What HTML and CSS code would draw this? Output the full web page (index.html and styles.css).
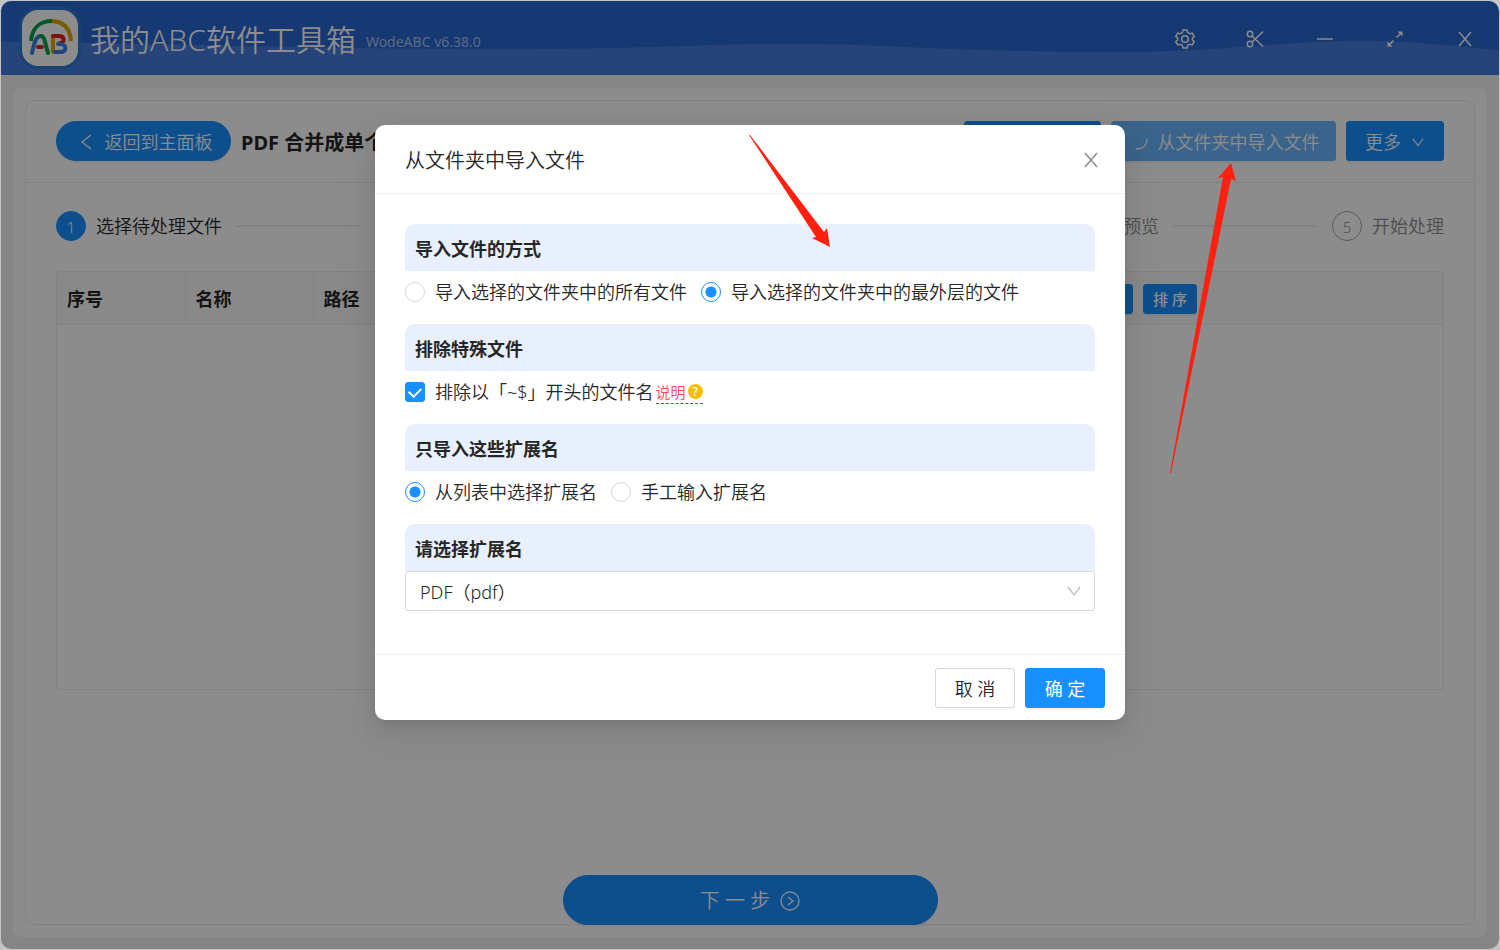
FILE: index.html
```html
<!DOCTYPE html>
<html lang="zh-CN">
<head>
  <meta charset="UTF-8">
  <meta name="viewport" content="width=device-width, initial-scale=1.0">
  <title>我的ABC软件工具箱</title>
  <link rel="stylesheet" href="styles.css">
</head>
<body>
  <div class="window">
    <!-- Title bar -->
    <header class="titlebar">
      <svg class="wave" viewBox="0 0 1500 74" preserveAspectRatio="none" aria-hidden="true">
        <path d="M0 41 C120 41 300 48 500 48 C700 48 720 40 860 44 C960 49 1040 51 1120 51 C1220 51 1280 40 1365 40 C1420 40 1460 46 1500 49 V74 H0 Z" fill="#457ddc"/>
      </svg>
      <div class="brand">
        <svg class="logo" viewBox="0 0 56 56" aria-hidden="true" fill="none" stroke-linecap="round" stroke-linejoin="round">
          <path d="M49 31 C48 17 40 11 28 11" stroke="#e0a400" stroke-width="4" stroke-linecap="butt"/>
          <path d="M9 31 C10 18 18 11 30 11" stroke="#00a046" stroke-width="4" stroke-linecap="butt"/>
          <path d="M10 43 C13 29 15 26 19 26" stroke="#3f7fe8" stroke-width="4"/>
          <path d="M19 26 C23 26 23 34 26 43" stroke="#00a046" stroke-width="4"/>
          <path d="M16 37 H20" stroke="#e02222" stroke-width="4"/>
          <path d="M31 27 V42" stroke="#e0a400" stroke-width="4"/>
          <path d="M31 26 H37 C43 26 43 33 38 33" stroke="#e02222" stroke-width="4"/>
          <path d="M36 34 H38 C45 34 45 42 39 42 H33" stroke="#3f7fe8" stroke-width="4"/>
        </svg>
        <h1>我的ABC软件工具箱</h1>
        <span class="version">WodeABC v6.38.0</span>
      </div>
      <div class="controls">
        <button type="button" aria-label="设置">
          <svg viewBox="0 0 20 20"><path d="M8 1 H12 L12.600 3.600 L14.600 4.700 L17.200 4 L19.200 7.400 L17.300 9.200 V10.800 L19.200 12.600 L17.200 16 L14.600 15.300 L12.600 16.400 L12 19 H8 L7.400 16.400 L5.400 15.300 L2.800 16 L0.800 12.600 L2.700 10.800 V9.200 L0.800 7.400 L2.800 4 L5.400 4.700 L7.400 3.600 Z"/><circle cx="10" cy="10" r="3.300"/></svg>
        </button>
        <button type="button" aria-label="截图">
          <svg viewBox="0 0 20 20"><circle cx="5" cy="5" r="2.700"/><circle cx="5" cy="15" r="2.700"/><path d="M7 7 L18 17.500 M7 13 L18 2.500"/></svg>
        </button>
        <button type="button" aria-label="最小化">
          <svg viewBox="0 0 20 20"><path d="M2 10 H18"/></svg>
        </button>
        <button type="button" aria-label="最大化">
          <svg viewBox="0 0 20 20"><path d="M11.500 8.500 L16 4 M8.500 11.500 L4 16"/><path class="solid" d="M12.500 2.500 H17.500 V7.500 Z M2.500 12.500 V17.500 H7.500 Z"/></svg>
        </button>
        <button type="button" aria-label="关闭">
          <svg viewBox="0 0 20 20"><path d="M4 3 L16 17 M16 3 L4 17"/></svg>
        </button>
      </div>
    </header>

    <!-- Page -->
    <main class="page">
      <div class="card">
        <div class="panel">
          <div class="toolbar">
            <button type="button" class="btn primary back">
              <svg class="icon" viewBox="0 0 16 16"><path d="M12 1 L3 8 L12 15"/></svg>
              返回到主面板
            </button>
            <h2>PDF 合并成单个</h2>
            <div class="actions">
              <button type="button" class="btn primary add" aria-label="添加文件"></button>
              <button type="button" class="btn primary loading">
                <svg class="icon" viewBox="0 0 16 16"><path d="M15 5 C15 11 11 15 4 15"/></svg>
                从文件夹中导入文件
              </button>
              <button type="button" class="btn primary more">
                更多
                <svg class="icon small" viewBox="0 0 16 16"><path d="M2 4 L8 12 L14 4"/></svg>
              </button>
            </div>
          </div>

          <ol class="steps">
            <li class="active"><span class="num">1</span>选择待处理文件</li>
            <li></li>
            <li></li>
            <li class="preview">预览</li>
            <li><span class="num">5</span>开始处理</li>
          </ol>

          <div class="table-wrap">
            <table>
              <thead>
                <tr>
                  <th>序号</th>
                  <th>名称</th>
                  <th>路径</th>
                  <th class="ops">
                    <div class="ops-row">
                      <button type="button" class="btn primary mini" aria-label="筛选"></button>
                      <button type="button" class="btn primary mini">排 序</button>
                    </div>
                  </th>
                </tr>
              </thead>
            </table>
          </div>

          <button type="button" class="btn primary next">
            下 一 步
            <svg class="icon" viewBox="0 0 20 20"><circle cx="10" cy="10" r="9"/><path d="M8 6 L13 10 L8 14"/></svg>
          </button>
        </div>
      </div>
    </main>

    <div class="mask"></div>
  </div>

  <!-- Import dialog -->
  <div class="modal" role="dialog" aria-labelledby="modalTitle">
    <div class="modal-header">
      <h2 id="modalTitle">从文件夹中导入文件</h2>
      <button type="button" class="close" aria-label="关闭">
        <svg viewBox="0 0 20 20"><path d="M4 3 L16 17 M16 3 L4 17"/></svg>
      </button>
    </div>
    <div class="modal-body">
      <h3>导入文件的方式</h3>
      <div class="row">
        <label><input type="radio" name="mode">导入选择的文件夹中的所有文件</label>
        <label><input type="radio" name="mode" checked>导入选择的文件夹中的最外层的文件</label>
      </div>

      <h3>排除特殊文件</h3>
      <div class="row exclude">
        <label><input type="checkbox" checked>排除以「~$」开头的文件名</label>
        <a href="#" class="help">说明<span class="mark">?</span></a>
      </div>

      <h3>只导入这些扩展名</h3>
      <div class="row">
        <label><input type="radio" name="ext" checked>从列表中选择扩展名</label>
        <label><input type="radio" name="ext">手工输入扩展名</label>
      </div>

      <h3><label for="extSelect">请选择扩展名</label></h3>
      <div class="select">
        <select id="extSelect">
          <option>PDF（pdf）</option>
        </select>
        <svg viewBox="0 0 16 16"><path d="M2 4 L8 12 L14 4"/></svg>
      </div>
    </div>
    <div class="modal-footer">
      <button type="button" class="btn">取 消</button>
      <button type="button" class="btn primary">确 定</button>
    </div>
  </div>

  <!-- Arrows over the dialog and the page -->
  <svg class="arrows" width="500" height="350" viewBox="745 130 500 350" aria-hidden="true">
    <path d="M749 135 L750 135 L824 232 L827 228 L830 247 L812 238 L816 237 Z"/>
    <path d="M1170 473 L1171 473 L1231 179 L1236 181 L1231 163 L1218 178 L1223 177 Z"/>
  </svg>
</body>
</html>
```
FILE: styles.css
```css
* {
  box-sizing: border-box;
}

body {
  margin: 0;
  padding: 1px;
  min-height: 100vh;
  display: flex;
  background: #c4c4c4;
  color: #262626;
  font-family: "Noto Sans", "Noto Sans CJK SC", sans-serif;
  font-size: 18px;
  font-weight: 350;
  line-height: 28px;
}

h1, h2, h3 {
  margin: 0;
}

button, input, select {
  font: inherit;
  color: inherit;
  margin: 0;
}

svg {
  fill: none;
  stroke: currentColor;
}

.window {
  position: relative;
  flex: 1;
  display: flex;
  flex-direction: column;
  background: #f2f2f2;
  border-radius: 10px;
  overflow: hidden;
}

/* Title bar */
.titlebar {
  position: relative;
  height: 74px;
  display: flex;
  align-items: center;
  justify-content: space-between;
  padding-left: 21px;
  background: #2866d1;
  color: #fff;
}

.wave {
  position: absolute;
  inset: 0;
  width: 100%;
  height: 100%;
  stroke: none;
}

.brand {
  position: relative;
  display: flex;
  align-items: center;
}

.logo {
  width: 56px;
  height: 56px;
  margin-right: 12px;
  background: #fff;
  border-radius: 16px;
  box-shadow: 0 0 0 3px #2a7ad0;
}

.brand h1 {
  padding-top: 3px;
  font-size: 30px;
  font-weight: 350;
  line-height: 40px;
}

.version {
  margin-left: 10px;
  padding-top: 8px;
  font-size: 14px;
  font-weight: 400;
  color: rgba(255, 255, 255, 0.6);
}

.controls {
  position: relative;
  display: flex;
  padding-top: 2px;
  margin-right: -1px;
}

.controls button {
  width: 70px;
  height: 40px;
  padding: 0;
  border: 0;
  background: none;
}

.controls svg {
  display: block;
  width: 20px;
  height: 20px;
  margin: 0 auto;
  stroke-width: 1.5;
}

.solid {
  fill: currentColor;
  stroke: none;
}

/* Page */
.page {
  flex: 1;
  display: flex;
  padding: 13px 12px 12px;
}

.card {
  flex: 1;
  display: flex;
  padding: 12px;
  background: #fff;
  border-radius: 8px;
}

.panel {
  flex: 1;
  display: flex;
  flex-direction: column;
  border: 1px solid #ebebeb;
  border-radius: 10px;
}

.toolbar {
  display: flex;
  align-items: center;
  gap: 10px;
  padding: 20px 30px 21px;
  border-bottom: 1px solid #ebebeb;
}

.toolbar h2 {
  padding-top: 3px;
  font-size: 20px;
  font-weight: 700;
}

.actions {
  display: flex;
  gap: 10px;
  margin-left: auto;
}

.btn {
  display: inline-flex;
  align-items: center;
  justify-content: center;
  gap: 10px;
  height: 40px;
  padding: 2px 18px 0;
  border: 1px solid #d9d9d9;
  border-radius: 3px;
  background: #fff;
  box-shadow: 0 2px 0 rgba(0, 0, 0, 0.02);
  white-space: nowrap;
}

.primary {
  background: #1890ff;
  border-color: #1890ff;
  color: #fff;
  box-shadow: 0 2px 0 rgba(0, 0, 0, 0.04);
}

.icon {
  width: 16px;
  height: 16px;
  stroke-width: 1.3;
}

.small {
  width: 14px;
  height: 14px;
}

.back {
  width: 175px;
  padding-right: 14px;
  border-radius: 20px;
}

.add {
  width: 137px;
}

.loading {
  width: 225px;
  padding-right: 14px;
  background: #6cb7ff;
  border-color: #6cb7ff;
}

.more {
  width: 98px;
}

/* Steps */
.steps {
  display: grid;
  grid-template-columns: repeat(4, 1fr) auto;
  margin: 0;
  padding: 28px 30px;
  list-style: none;
  color: #8c8c8c;
}

.steps li {
  display: flex;
  align-items: center;
  gap: 10px;
  white-space: nowrap;
}

.steps li:not(:last-child)::after {
  content: "";
  flex: 1;
  height: 2px;
  margin: 0 15px 0 4px;
  background: #ebebeb;
}

.steps .preview {
  padding-left: 110px;
}

.num {
  width: 30px;
  height: 30px;
  border: 1px solid #a6a6a6;
  border-radius: 50%;
  font-size: 15px;
  line-height: 30px;
  text-align: center;
}

.steps .active {
  color: #262626;
}

.active .num {
  background: #1890ff;
  border-color: #1890ff;
  color: #fff;
}

/* File table */
.table-wrap {
  height: 419px;
  margin: 2px 30px 0;
  border: 1px solid #ebebeb;
  border-radius: 4px;
}

table {
  width: 100%;
  table-layout: fixed;
  border-collapse: collapse;
}

th {
  width: 128px;
  height: 52px;
  padding: 2px 10px 0;
  background: #fafafa;
  border-right: 1px solid #ebebeb;
  border-bottom: 1px solid #ebebeb;
  font-weight: 700;
  text-align: left;
}

.ops {
  width: auto;
  border-right: 0;
}

.ops-row {
  display: flex;
  justify-content: flex-end;
  gap: 10px;
  padding-right: 236px;
}

.mini {
  width: 54px;
  height: 30px;
  padding: 0;
  font-size: 15px;
  font-weight: 500;
}

.next {
  width: 375px;
  height: 50px;
  margin: auto auto -1px;
  border-radius: 25px;
  font-size: 20px;
}

.next .icon {
  width: 20px;
  height: 20px;
}

.mask {
  position: absolute;
  inset: 0;
  background: rgba(0, 0, 0, 0.45);
}

/* Import dialog */
.modal {
  position: absolute;
  top: 125px;
  left: 50%;
  width: 750px;
  margin-left: -375px;
  background: #fff;
  border-radius: 10px;
  box-shadow: 0 4px 8px -5px rgba(0, 0, 0, 0.12), 0 8px 20px rgba(0, 0, 0, 0.08), 0 12px 36px 10px rgba(0, 0, 0, 0.05);
}

.modal-header {
  display: flex;
  align-items: center;
  justify-content: space-between;
  height: 69px;
  padding: 2px 24px 0 30px;
  border-bottom: 1px solid #f0f0f0;
}

.modal-header h2 {
  padding-top: 2px;
  font-size: 20px;
  font-weight: 350;
}

.close {
  padding: 0;
  border: 0;
  background: none;
  color: #8c8c8c;
}

.close svg {
  display: block;
  width: 20px;
  height: 20px;
  stroke-width: 1.5;
}

.modal-body {
  padding: 30px 30px 43px;
}

.modal-body h3 {
  padding: 11px 10px 8px;
  background: #e8effd;
  border-radius: 10px 10px 0 0;
  font-size: 18px;
  font-weight: 700;
}

.row {
  display: flex;
  align-items: center;
  gap: 14px;
  height: 42px;
  margin-bottom: 11px;
}

.exclude {
  gap: 2px;
}

.row label {
  display: flex;
  align-items: center;
  gap: 10px;
}

input {
  appearance: none;
  width: 20px;
  height: 20px;
  border: 1px solid #d9d9d9;
  background: #fff;
}

input[type="radio"] {
  border-radius: 50%;
}

input[type="radio"]:checked {
  border-color: #1890ff;
  background: radial-gradient(circle, #1890ff 5px, #fff 6px);
}

input[type="checkbox"] {
  display: grid;
  place-items: center;
  border-radius: 3px;
}

input[type="checkbox"]:checked {
  background: #1890ff;
  border-color: #1890ff;
}

input[type="checkbox"]:checked::after {
  content: "";
  width: 6px;
  height: 10px;
  margin-bottom: 3px;
  border: solid #fff;
  border-width: 0 2px 2px 0;
  transform: rotate(45deg);
}

.help {
  display: flex;
  align-items: center;
  gap: 2px;
  border-bottom: 1px dashed #e02020;
  color: #ff4d4f;
  font-size: 15px;
  line-height: 22px;
  text-decoration: none;
}

.mark {
  width: 15px;
  height: 15px;
  border-radius: 50%;
  background: #fabe00;
  color: #fff;
  font-size: 12px;
  font-weight: 500;
  line-height: 15px;
  text-align: center;
}

.select {
  position: relative;
}

.select select {
  display: block;
  width: 100%;
  height: 40px;
  padding: 2px 14px 0;
  appearance: none;
  border: 1px solid #d9d9d9;
  border-radius: 3px;
  background: #fff;
}

.select svg {
  position: absolute;
  top: 12px;
  right: 13px;
  width: 16px;
  height: 16px;
  color: #bfbfbf;
  stroke-width: 1.3;
}

.modal-footer {
  display: flex;
  justify-content: flex-end;
  gap: 10px;
  padding: 13px 20px 12px;
  border-top: 1px solid #f0f0f0;
}

.modal-footer .btn {
  width: 80px;
}

.modal-footer .primary {
  font-weight: 400;
}

.arrows {
  position: absolute;
  top: 130px;
  left: 50%;
  margin-left: -5px;
  fill: #ff2010;
  stroke: none;
  pointer-events: none;
}
```
